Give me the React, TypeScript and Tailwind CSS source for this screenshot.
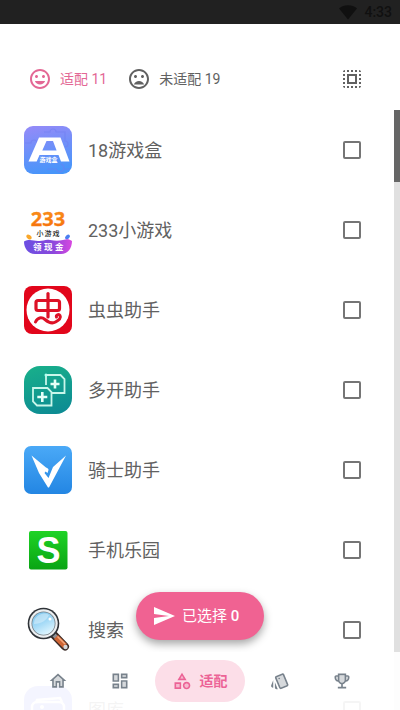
import { useState } from 'react';
import type { ReactNode } from 'react';
import { MdMood, MdMoodBad, MdSelectAll, MdSend } from 'react-icons/md';

interface AppItem {
  name: string;
  icon: ReactNode;
}

const GameBoxIcon = () => (
  <svg viewBox="0 0 48 48" className="size-12">
    <defs>
      <linearGradient id="gamebox" x1="0.2" y1="0" x2="0.4" y2="1">
        <stop offset="0" stopColor="#938bf8" />
        <stop offset="1" stopColor="#4795fa" />
      </linearGradient>
    </defs>
    <rect width="48" height="48" rx="9" fill="url(#gamebox)" />
    <g fill="none" stroke="#6f7df0" strokeOpacity="0.55" strokeWidth="1.2">
      <path d="M20 6h6a3 3 0 1 1 6 0h9v9a3 3 0 1 1 0 6" />
      <path d="M1 17h6a3 3 0 1 1 6 0" />
      <path d="M23 43h9a4 4 0 1 0 5-5M40 43h6" />
    </g>
    <path d="M15 11.500h21.500L45.500 35.500h-8.500l-2.500-6.500H15.500l-2.800 6.500H4.500zM22.500 15l-4.200 9.500h14.300L29 15z" fill="#fff" fillRule="evenodd" />
    <text x="24.500" y="35.500" textAnchor="middle" fontSize="6" fontWeight="700" fill="#fff" fontFamily="Noto Sans CJK SC, sans-serif">
      游戏盒
    </text>
  </svg>
);

const Game233Icon = () => (
  <svg viewBox="0 0 48 48" className="size-12">
    <defs>
      <linearGradient id="orange233" x1="0" y1="0" x2="0" y2="1">
        <stop offset="0" stopColor="#fb9a1c" />
        <stop offset="1" stopColor="#f5680a" />
      </linearGradient>
      <linearGradient id="bowl233">
        <stop offset="0" stopColor="#6a4fe2" />
        <stop offset="0.6" stopColor="#8a48dc" />
        <stop offset="1" stopColor="#d848e0" />
      </linearGradient>
    </defs>
    <text x="24" y="20" textAnchor="middle" fontSize="20" fontWeight="700" fill="url(#orange233)" stroke="#f88012" strokeWidth="0.3" fontFamily="Open Sans, Roboto, sans-serif">
      233
    </text>
    <text x="12.500 20.500 28.500" y="30" fontSize="7" fontWeight="500" fill="#222" fontFamily="Noto Sans CJK SC, sans-serif">
      小游戏
    </text>
    <ellipse cx="5" cy="31" rx="3" ry="2" transform="rotate(35 5 31)" fill="#f9a72b" />
    <ellipse cx="43.500" cy="31" rx="2.800" ry="1.800" transform="rotate(-40 43.500 31)" fill="#4b7ff0" />
    <path d="M0 35.500c5-3 9-1 14-.5s7-2 12-1 9 1 13 0 6-1 9 1c0 7-4 13-11 13H11C4 48 0 42 0 35.500z" fill="url(#bowl233)" />
    <text x="9 20 31" y="44" fontSize="8.500" fontWeight="700" fill="#fff" fontFamily="Noto Sans CJK SC, sans-serif">
      领现金
    </text>
  </svg>
);

const BugHelperIcon = () => (
  <svg viewBox="0 0 48 48" className="size-12">
    <rect width="48" height="48" rx="8" fill="#e2061b" />
    <circle cx="24" cy="24" r="21.500" fill="#fff" />
    <g fill="none" stroke="#dd1126" strokeWidth="3.200" strokeLinecap="round" strokeLinejoin="round">
      <rect x="12" y="14.500" width="23.500" height="10" rx="2" />
      <path d="M24 7.500V31" />
      <path d="M11.500 36c2-4.500 6-5.500 9.500-2.500s7 4.500 10.500 2.500 6-4 4.500-6.500c-1.200-1.800-4.500-.5-3.500 1.500" strokeWidth="3" />
    </g>
  </svg>
);

const MultiOpenIcon = () => (
  <svg viewBox="0 0 48 48" className="size-12">
    <defs>
      <linearGradient id="multi" x1="0.3" y1="0" x2="0.6" y2="1">
        <stop offset="0" stopColor="#18ae8b" />
        <stop offset="1" stopColor="#0d8c93" />
      </linearGradient>
    </defs>
    <rect width="48" height="48" rx="16" fill="url(#multi)" />
    <g fill="none" stroke="#c9f6ea" strokeWidth="1.800">
      <path d="M22 19V9h14.500l4 4v14H28" />
      <path d="M9 22h14.500l4 4v13.500H13l-4-4z" />
    </g>
    <path d="M31 13.500v9M26.500 18h9M18.300 26v10M13.300 31h10" stroke="#e6fff8" strokeWidth="2.600" />
    <circle cx="22" cy="9" r="1.500" fill="#b4fff0" />
  </svg>
);

const KnightIcon = () => (
  <svg viewBox="0 0 48 48" className="size-12">
    <defs>
      <linearGradient id="knight" x1="0" y1="0" x2="0" y2="1">
        <stop offset="0" stopColor="#4aa9f7" />
        <stop offset="1" stopColor="#2386e3" />
      </linearGradient>
    </defs>
    <rect width="48" height="48" rx="7" fill="url(#knight)" />
    <path d="M7.500 9.500L22 21.500c1.500.5 2.500 1 2.500 2.500l-1 3-2-1.500-1 1.500 4 5 4.500-11L42 9.500 25 41.500h-1L15 27z" fill="#fff" />
  </svg>
);

const PhoneParkIcon = () => (
  <svg viewBox="0 0 48 48" className="size-12">
    <defs>
      <linearGradient id="park" x1="0" y1="0" x2="0" y2="1">
        <stop offset="0" stopColor="#1fd326" />
        <stop offset="1" stopColor="#0aa414" />
      </linearGradient>
    </defs>
    <rect x="5" y="5" width="38.500" height="38.500" rx="2" fill="url(#park)" />
    <text x="24.500" y="37" textAnchor="middle" fontSize="36" fontWeight="700" fill="#fff" fontFamily="Liberation Sans, sans-serif">
      S
    </text>
  </svg>
);

const SearchIcon = () => (
  <svg viewBox="0 0 48 48" className="size-12">
    <defs>
      <linearGradient id="lens" x1="0.2" y1="0" x2="0.7" y2="1">
        <stop offset="0" stopColor="#7cc4ec" />
        <stop offset="0.5" stopColor="#a6dbf7" />
        <stop offset="1" stopColor="#e2f7ff" />
      </linearGradient>
    </defs>
    <path d="M30 29l11 11.500" stroke="#3a2a26" strokeWidth="8" strokeLinecap="round" />
    <path d="M28 27l4.500 4.500" stroke="#8b8f94" strokeWidth="4" />
    <path d="M32 31l9 9" stroke="#cf6535" strokeWidth="5.500" />
    <path d="M33.500 30.500l7.500 7.500" stroke="#f3a77c" strokeWidth="1.500" />
    <circle cx="41.500" cy="41" r="2.200" fill="#d5d8db" />
    <circle cx="19.500" cy="17.500" r="15.800" fill="#2f3338" />
    <circle cx="19.500" cy="17.500" r="14.200" fill="#eceff1" />
    <circle cx="19.500" cy="17.500" r="12" fill="#777f86" />
    <circle cx="19.500" cy="17.500" r="11.200" fill="url(#lens)" />
    <path d="M10 18a10 10 0 0 1 15-9c-2 5-8 9-15 9z" fill="#fff" opacity="0.35" />
    <circle cx="26" cy="13" r="1.500" fill="#fff" />
  </svg>
);

const GalleryIcon = () => (
  <svg viewBox="0 0 48 48" className="size-12">
    <rect width="48" height="48" rx="14" fill="#6b6cf5" />
    <path d="M12 17l1-3 23-2 2 4" fill="none" stroke="#fff" strokeWidth="2.500" />
    <rect x="8" y="16" width="32" height="24" rx="5" fill="none" stroke="#fff" strokeWidth="2.500" />
    <circle cx="18" cy="21" r="2" fill="#fff" />
    <path d="M10 34l11-9 6 5 5-6 7 8v8H10z" fill="#fff" />
  </svg>
);

const apps: AppItem[] = [
  { name: '18游戏盒', icon: <GameBoxIcon /> },
  { name: '233小游戏', icon: <Game233Icon /> },
  { name: '虫虫助手', icon: <BugHelperIcon /> },
  { name: '多开助手', icon: <MultiOpenIcon /> },
  { name: '骑士助手', icon: <KnightIcon /> },
  { name: '手机乐园', icon: <PhoneParkIcon /> },
  { name: '搜索', icon: <SearchIcon /> },
  { name: '图库', icon: <GalleryIcon /> },
];

// Two-tone icons: a faint fill layer under the outline
const navItems = [
  {
    label: '主页',
    fill: 'M7 10.190V18h2v-6h6v6h2v-7.810l-5-4.500z',
    line: 'M12 3L2 12h3v8h6v-6h2v6h6v-8h3L12 3zm5 15h-2v-6H9v6H7v-7.810l5-4.500 5 4.500V18z',
  },
  {
    label: '面板',
    fill: 'M5 5h4v6H5zm10 8h4v6h-4zM5 17h4v2H5zM15 5h4v2h-4z',
    line: 'M19 5v2h-4V5h4M9 5v6H5V5h4m10 8v6h-4v-6h4M9 17v2H5v-2h4M21 3h-8v6h8V3zM11 3H3v10h8V3zm10 8h-8v10h8V11zm-10 4H3v6h8v-6z',
  },
  {
    label: '适配',
    fill: 'M5 15.500h4v4H5zM12 5.840L10.070 9h3.860zM17.500 15a2.500 2.500 0 1 0 0 5 2.500 2.500 0 0 0 0-5z',
    line: 'M12 2l-5.500 9h11L12 2zm0 3.840L13.930 9h-3.870L12 5.840zM17.500 13c-2.490 0-4.500 2.010-4.500 4.500s2.010 4.500 4.500 4.500 4.500-2.010 4.500-4.500-2.010-4.500-4.500-4.500zm0 7c-1.380 0-2.500-1.120-2.500-2.500s1.120-2.500 2.500-2.500 2.500 1.120 2.500 2.500-1.120 2.500-2.500 2.500zM3 21.500h8v-8H3v8zm2-6h4v4H5v-4z',
  },
  {
    label: '卡片',
    fill: 'M20.180 16.700L15.230 4.750h-.010L7.870 7.790l4.960 11.960z',
    line: 'M2.530 19.650l1.340.560v-9.030l-2.430 5.860c-.410 1.020.080 2.190 1.090 2.610zm19.500-3.700L17.070 3.980c-.310-.750-1.040-1.210-1.810-1.230-.260 0-.530.040-.790.150L7.100 5.950c-.750.310-1.210 1.030-1.230 1.800-.010.270.040.540.150.800l4.960 11.970c.310.760 1.050 1.220 1.830 1.230.260 0 .520-.050.770-.150l7.360-3.050c1.020-.420 1.510-1.590 1.090-2.600zm-9.200 3.800L7.870 7.790l7.350-3.040h.010l4.950 11.950-7.350 3.050zM10 9a1 1 0 1 0 2 0 1 1 0 0 0-2 0zM5.880 19.750c0 1.100.900 2 2 2h1.450l-3.450-8.340v6.340z',
  },
  {
    label: '成就',
    fill: 'M12 14c-1.650 0-3-1.350-3-3V5h6v6c0 1.650-1.350 3-3 3zM5 7h2v3.820C5.840 10.400 5 9.300 5 8zM19 7h-2v3.820c1.160-.420 2-1.520 2-2.820z',
    line: 'M19 5h-2V3H7v2H5c-1.100 0-2 .900-2 2v1c0 2.550 1.920 4.630 4.390 4.940.630 1.500 1.980 2.630 3.610 2.960V19H7v2h10v-2h-4v-3.100c1.630-.330 2.980-1.460 3.610-2.960C19.080 12.630 21 10.550 21 8V7c0-1.100-.900-2-2-2zM5 8V7h2v3.820C5.840 10.400 5 9.300 5 8zm7 6c-1.650 0-3-1.350-3-3V5h6v6c0 1.650-1.350 3-3 3zm7-6c0 1.300-.840 2.400-2 2.820V7h2v1z',
  },
];

export default function App() {
  const [selected, setSelected] = useState<string[]>([]);
  const [active, setActive] = useState('适配');

  const toggle = (name: string) =>
    setSelected((prev) => (prev.includes(name) ? prev.filter((n) => n !== name) : [...prev, name]));

  const toggleAll = () => setSelected(selected.length === apps.length ? [] : apps.map((a) => a.name));

  return (
    <div className="relative flex h-screen flex-col overflow-hidden bg-white font-['Roboto','Noto_Sans_CJK_SC',sans-serif] text-[#616161]">
      <div className="flex h-6 shrink-0 items-center justify-end gap-1.5 bg-[#212121] pr-2 text-[#101010]">
        <svg viewBox="0 0 20 16" className="h-4 w-5" fill="currentColor">
          <path d="M10 15.500L1 4.500C3.500 2.500 6.500 1.300 10 1.300s6.500 1.200 9 3.200z" />
        </svg>
        <span className="text-sm font-medium">4:33</span>
      </div>

      <header className="flex shrink-0 items-center justify-between pt-[31px] pr-9 pb-[7px] pl-7">
        <div className="flex gap-5 text-sm">
          <button className="flex h-12 items-center gap-2 text-[#e36895]">
            <MdMood className="size-6" />
            适配 11
          </button>
          <button className="flex h-12 items-center gap-2">
            <MdMoodBad className="size-6" />
            未适配 19
          </button>
        </div>
        <button aria-label="全选" onClick={toggleAll}>
          <MdSelectAll className="size-6" />
        </button>
      </header>

      <main className="flex min-h-0 flex-1">
        <ul className="min-w-0 flex-1 overflow-hidden">
          {apps.map((app) => (
            <li key={app.name}>
              <label className="flex h-20 items-center gap-4 pr-[33px] pl-6">
                {app.icon}
                <span className="flex-1 pt-0.5 text-lg">{app.name}</span>
                <input
                  type="checkbox"
                  checked={selected.includes(app.name)}
                  onChange={() => toggle(app.name)}
                  className="size-[18px] appearance-none rounded-[2px] border-2 border-[#757575] checked:border-[#f06292] checked:bg-[#f06292]"
                />
              </label>
            </li>
          ))}
        </ul>
        <div className="w-1.5 bg-[#e0e0e0]">
          <div className="h-[72px] bg-[#666666]" />
        </div>
      </main>

      <button className="absolute bottom-[70px] left-1/2 flex h-12 w-32 -translate-x-1/2 items-center gap-1.5 rounded-3xl bg-[#f06292] pl-4 text-[15px] text-white shadow-[0_4px_8px_rgba(0,0,0,0.35)]">
        <MdSend className="size-6" />
        <span className="whitespace-nowrap">
          已选择 <span className="font-medium">{selected.length}</span>
        </span>
      </button>

      <nav className="absolute inset-x-0 bottom-0 flex justify-center gap-2 bg-white/93 py-2 pr-px">
        {navItems.map((item) => {
          const isActive = item.label === active;
          return (
            <button
              key={item.label}
              aria-label={item.label}
              onClick={() => setActive(item.label)}
              className={
                isActive
                  ? 'flex h-[42px] items-center gap-2 rounded-full bg-[#fcdee8] px-[17px] text-sm font-bold text-[#ec6396]'
                  : 'flex h-[42px] w-[54px] items-center justify-center text-[#78828c]'
              }
            >
              <svg viewBox="0 0 24 24" className="size-5" fill="currentColor">
                <path d={item.fill} opacity="0.3" />
                <path d={item.line} />
              </svg>
              {isActive && <span>{item.label}</span>}
            </button>
          );
        })}
      </nav>
    </div>
  );
}
